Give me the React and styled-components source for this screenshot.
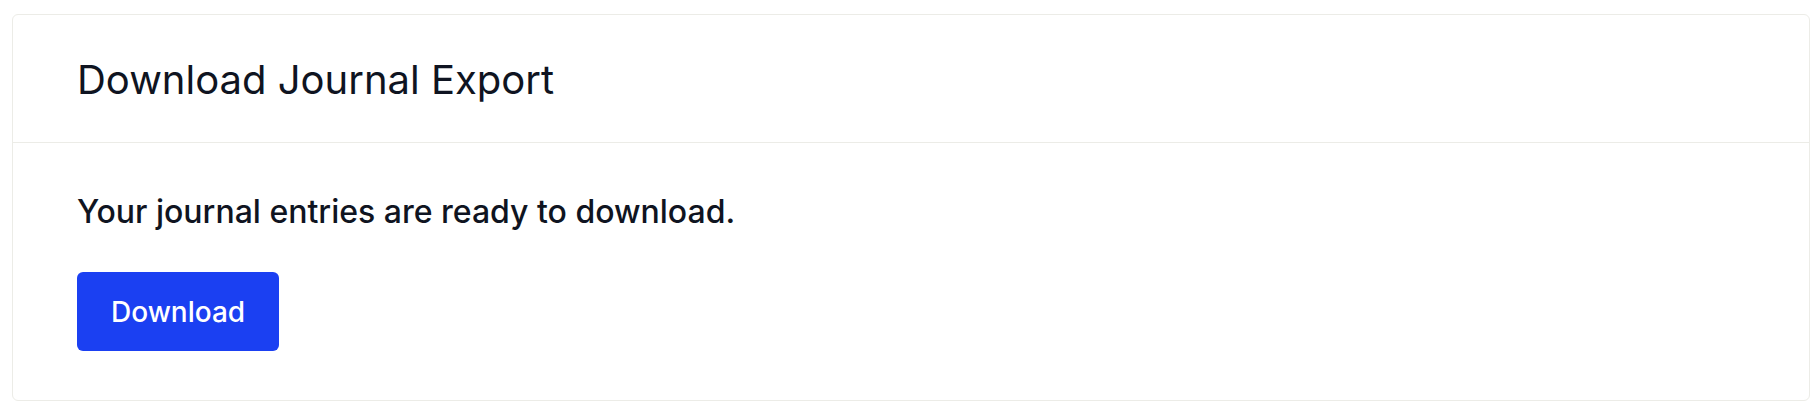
import styled, { createGlobalStyle } from "styled-components";

const GlobalStyle = createGlobalStyle`
  html, body {
    margin: 0;
    padding: 0;
    background: #ffffff;
    font-family: Inter, "Noto Sans", "Liberation Sans", sans-serif;
  }
  * {
    box-sizing: border-box;
  }
`;

const Page = styled.div`
  padding: 14px 8px 11px 12px;
`;

const Card = styled.section`
  border: 1px solid #ececE7;
  border-radius: 6px;
  background: #ffffff;
`;

const CardHeader = styled.header`
  padding: 41px 64px 38px;
  border-bottom: 1px solid #ececE7;
`;

const Title = styled.h1`
  margin: 0;
  font-size: 40px;
  line-height: 48px;
  font-weight: 400;
  color: #0f1421;
`;

const CardBody = styled.div`
  padding: 45px 64px 49px;
`;

const Message = styled.p`
  margin: 0 0 36px;
  font-size: 32px;
  line-height: 48px;
  font-weight: 500;
  color: #0f1421;
`;

const Button = styled.button`
  display: inline-flex;
  align-items: center;
  justify-content: center;
  height: 79px;
  padding: 0 34px;
  border: none;
  border-radius: 6px;
  background: #1b40f2;
  color: #ffffff;
  font-family: inherit;
  font-size: 28px;
  font-weight: 500;
  cursor: pointer;
`;

const App = () => {
  return (
    <>
      <GlobalStyle />
      <Page>
        <Card>
          <CardHeader>
            <Title>Download Journal Export</Title>
          </CardHeader>
          <CardBody>
            <Message>Your journal entries are ready to download.</Message>
            <Button>Download</Button>
          </CardBody>
        </Card>
      </Page>
    </>
  );
};

export default App;
